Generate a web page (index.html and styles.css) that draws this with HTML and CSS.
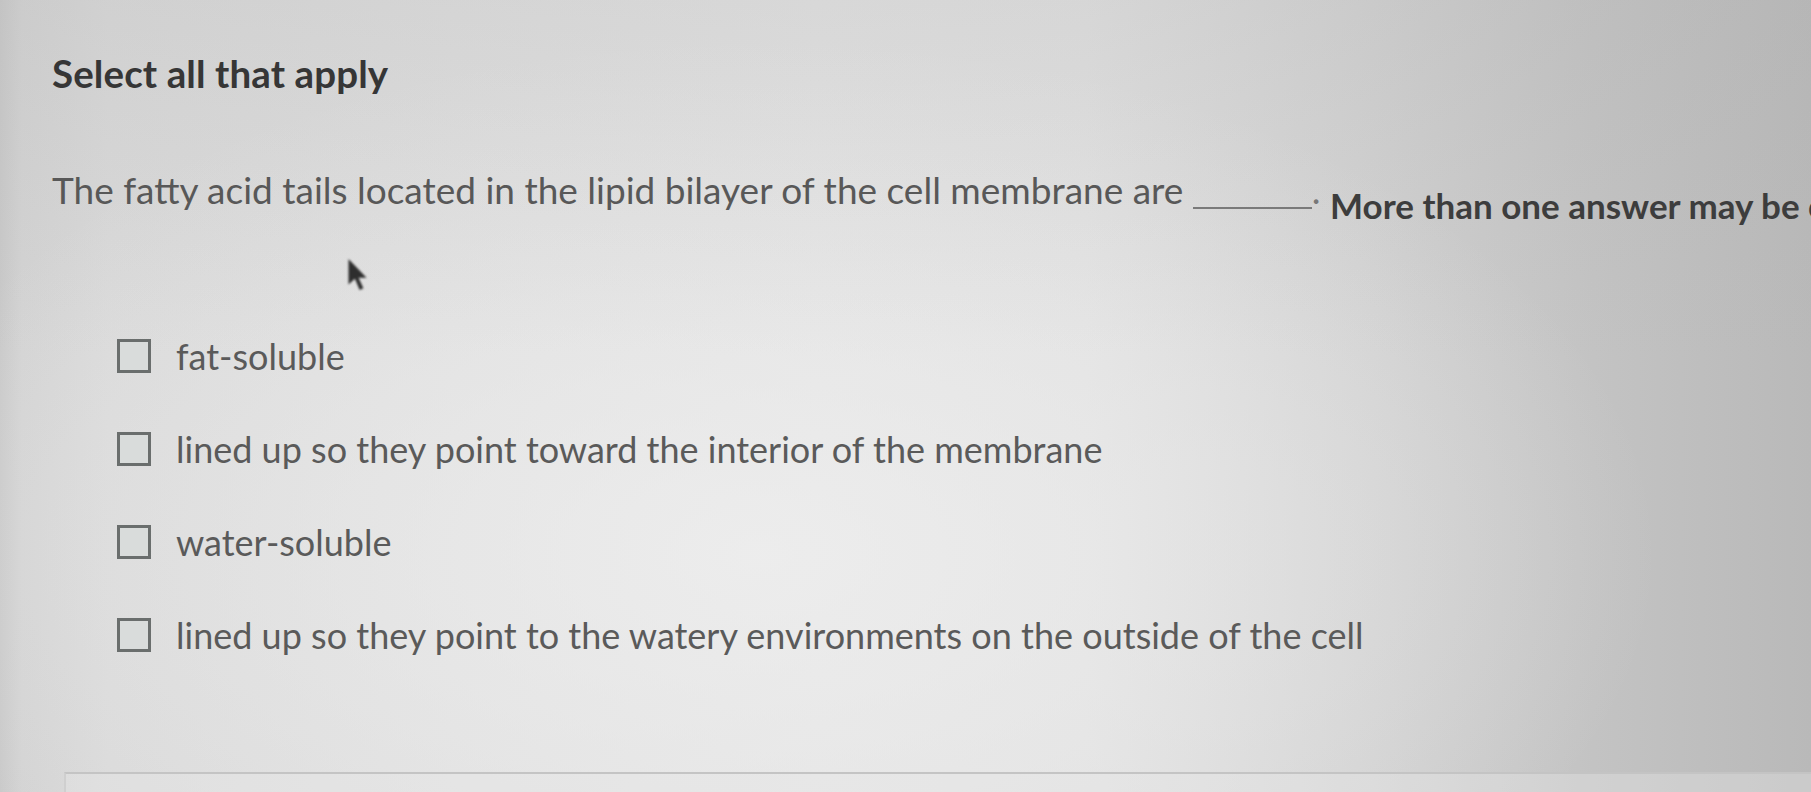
FILE: index.html
```html
<!DOCTYPE html>
<html lang="en">
<head>
<meta charset="utf-8">
<title>Select all that apply</title>
<link rel="stylesheet" href="styles.css">
</head>
<body>
<div class="screen">
  <main class="question-card">
    <h1 class="prompt-title">Select all that apply</h1>
    <p class="question-text">The fatty acid tails located in the lipid bilayer of the cell membrane are <span class="blank"></span><span class="period">.</span> <strong class="hint">More than one answer may be correct.</strong></p>
    <ul class="options">
      <li class="option"><span class="checkbox"></span><span class="option-label">fat-soluble</span></li>
      <li class="option"><span class="checkbox"></span><span class="option-label">lined up so they point toward the interior of the membrane</span></li>
      <li class="option"><span class="checkbox"></span><span class="option-label">water-soluble</span></li>
      <li class="option"><span class="checkbox"></span><span class="option-label">lined up so they point to the watery environments on the outside of the cell</span></li>
    </ul>
    <div class="answer-panel"></div>
  </main>
  <svg class="cursor" width="22" height="34" viewBox="0 0 20 32" aria-hidden="true">
    <path d="M2 1 L2 25 L8 19.5 L12.5 30 L16 28.5 L11.5 18.5 L19 18.5 Z" fill="#2e2e2e"/>
  </svg>
</div>
</body>
</html>
```

FILE: styles.css
```css
html, body {
  margin: 0;
  padding: 0;
}

body {
  width: 1811px;
  height: 792px;
  overflow: hidden;
  font-family: "Lato", "Liberation Sans", Arial, sans-serif;
}

.screen {
  position: relative;
  width: 1811px;
  height: 792px;
  overflow: hidden;
  background:
    radial-gradient(ellipse 900px 520px at 42% 70%, rgba(240,240,240,0.75) 0%, rgba(240,240,240,0) 100%),
    linear-gradient(90deg, #c9c9c9 0%, #d3d3d3 1.2%, #d9d9d9 6%, #dedede 25%, #e2e2e2 45%, #e0e0e0 60%, #d2d2d2 75%, #c3c3c3 88%, #b9b9b9 100%);
}

.screen::before {
  content: "";
  position: absolute;
  inset: 0;
  background: linear-gradient(180deg, rgba(170,170,170,0.18) 0%, rgba(170,170,170,0) 45%);
  pointer-events: none;
}

.question-card {
  position: relative;
  padding: 50px 0 0 52px;
  white-space: nowrap;
}

.prompt-title {
  margin: 0;
  font-size: 38.5px;
  line-height: 46px;
  font-weight: 700;
  color: #363636;
  letter-spacing: 0.1px;
}

.question-text {
  margin: 71px 0 0 0;
  font-size: 37px;
  line-height: 46px;
  color: #585858;
}

.blank {
  display: inline-block;
  width: 119px;
  height: 2px;
  background: #7a7a7a;
  vertical-align: -5px;
}

.period {
  color: #777;
}

.hint {
  font-weight: 700;
  color: #3d3d3d;
  font-size: 35px;
  position: relative;
  top: 15px;
}

.options {
  list-style: none;
  margin: 120px 0 0 0;
  padding: 0 0 0 65px;
  display: flex;
  flex-direction: column;
  gap: 47px;
}

.option {
  display: flex;
  align-items: center;
  gap: 25px;
  height: 46px;
}

.checkbox {
  box-sizing: border-box;
  width: 34px;
  height: 34px;
  border: 3.5px solid #6a6e6d;
  background: #d9dcdb;
  flex: none;
}

.option-label {
  font-size: 36px;
  line-height: 46px;
  color: #5a5a5a;
}

.answer-panel {
  margin: 114px 0 0 12px;
  height: 30px;
  border-top: 2px solid #c4c4c4;
  border-left: 2px solid #cfcfcf;
  background: rgba(230,230,230,0.4);
}

.cursor {
  position: absolute;
  left: 346px;
  top: 258px;
  filter: blur(1px);
}
```
